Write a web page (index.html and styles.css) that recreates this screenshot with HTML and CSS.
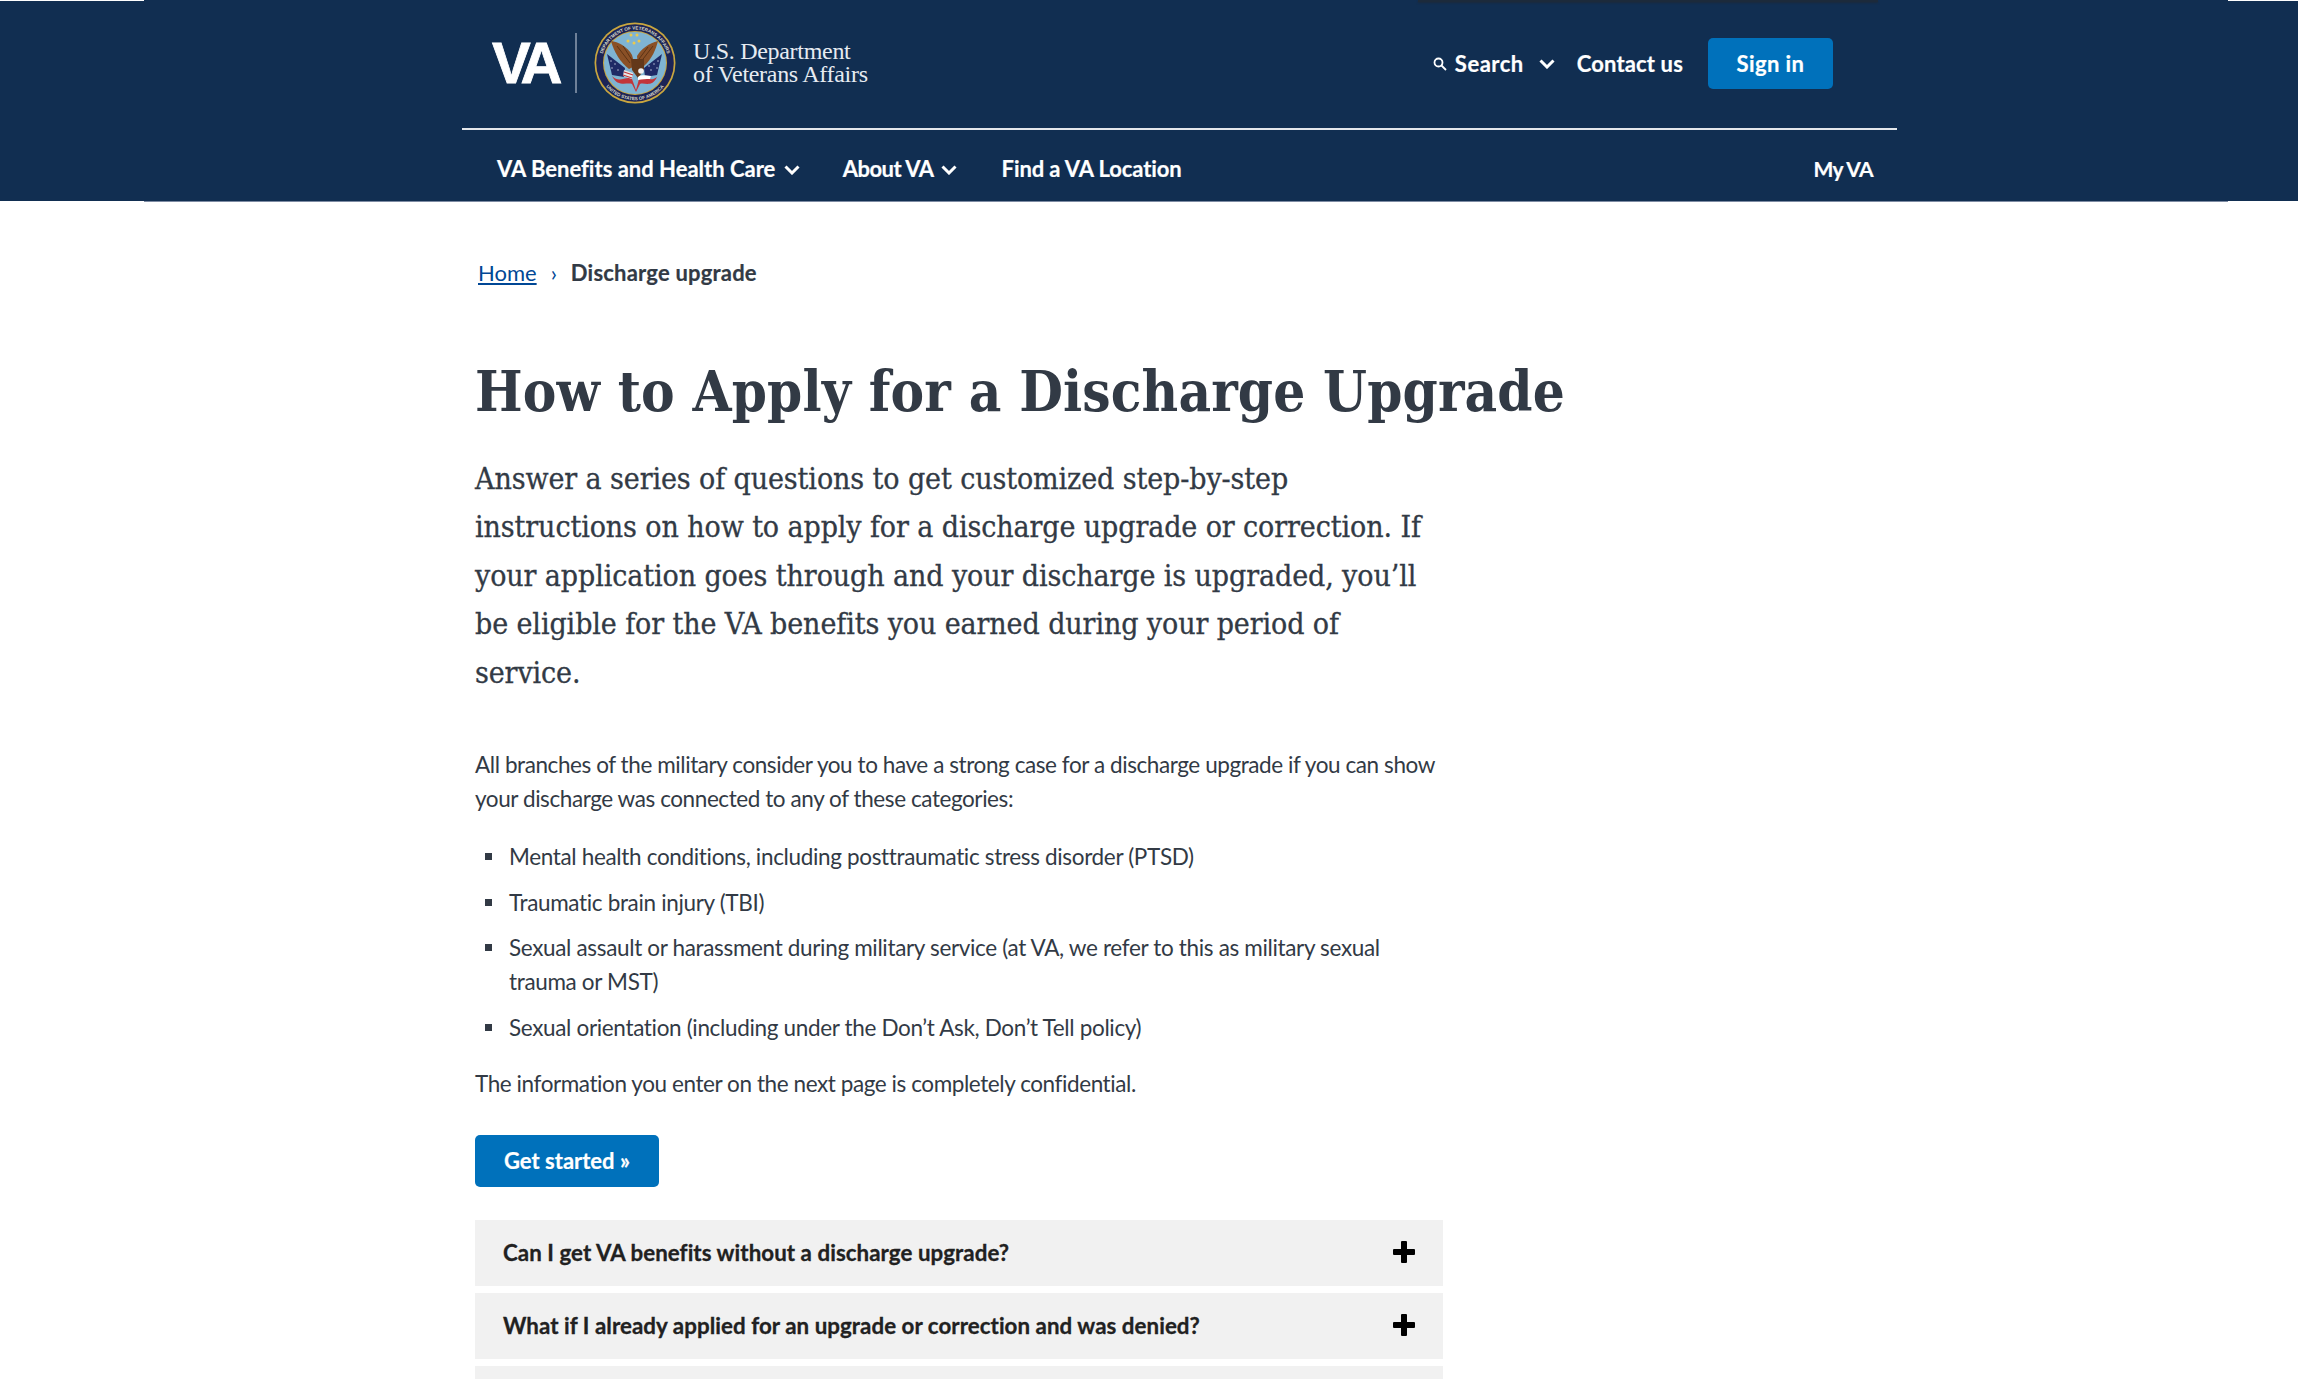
FILE: index.html
```html
<!DOCTYPE html>
<html lang="en">
<head>
  <meta charset="UTF-8">
  <meta name="viewport" content="width=device-width, initial-scale=1.0">
  <title>How to Apply for a Discharge Upgrade</title>
  <link rel="stylesheet" href="styles.css">
</head>
<body>
  <header class="site-header">
    <div class="edge edge-left"></div>
    <div class="edge edge-right"></div>
    <div class="top-shadow"></div>
    <div class="header-inner">
      <div class="header-top">
        <a class="logo" href="#">
          <span class="logo-va">VA</span>
          <span class="logo-divider"></span>
          <svg class="seal" viewBox="0 0 82 82" aria-hidden="true">
            <defs>
              <path id="ring-top" d="M7.500 41a33.500 33.500 0 0 1 67 0"/>
              <path id="ring-bottom" d="M3.800 41a37.200 37.200 0 0 0 74.400 0"/>
            </defs>
            <circle cx="41" cy="41" r="40.500" fill="#c9a63f"/>
            <circle cx="41" cy="41" r="38.800" fill="#1c2456"/>
            <text class="seal-text"><textPath href="#ring-top" startOffset="50%" text-anchor="middle">DEPARTMENT OF VETERANS AFFAIRS</textPath></text>
            <text class="seal-text"><textPath href="#ring-bottom" startOffset="50%" text-anchor="middle">UNITED STATES OF AMERICA</textPath></text>
            <circle cx="41" cy="41" r="32" fill="#c9a63f"/>
            <circle cx="41" cy="41" r="31" fill="#7fb4d3"/>
            <g fill="#ecc94b">
              <circle cx="37" cy="13" r="1.500"/><circle cx="43" cy="13" r="1.500"/>
              <circle cx="34" cy="19" r="1.500"/><circle cx="40" cy="21" r="1.500"/><circle cx="45" cy="19" r="1.500"/>
            </g>
            <path d="M13 32 L31 46 L30 55 L18 53Z" fill="#1f2a66"/>
            <path d="M68 32 L50 46 L51 55 L63 53Z" fill="#1f2a66"/>
            <g fill="#d5dcec">
              <circle cx="17" cy="39" r=".7"/><circle cx="21" cy="42" r=".7"/><circle cx="18" cy="46" r=".7"/><circle cx="24" cy="48" r=".7"/>
              <circle cx="64" cy="39" r=".7"/><circle cx="60" cy="42" r=".7"/><circle cx="63" cy="46" r=".7"/><circle cx="57" cy="48" r=".7"/><circle cx="55" cy="44" r=".7"/>
            </g>
            <path d="M17 19 C24 20 33 24 38 33 L41 44 L35 47 C26 40 20 30 17 19Z" fill="#8a5026"/>
            <path d="M64 19 C62 27 58 37 50 44 L44 44 L43 34 C47 27 55 21 64 19Z" fill="#8a5026"/>
            <path d="M23 24 L36 41 M29 24 L38 38 M59 24 L46 41 M54 25 L45 37" stroke="#5c3315" stroke-width="1" fill="none"/>
            <path d="M37 37 L50 37 L50 48 L44 56 L38 48Z" fill="#63381a"/>
            <circle cx="47" cy="49" r="2.800" fill="#f2f2f2"/>
            <path d="M18 54 C26 62 32 53 38 57 L42 68 L45 57 C50 53 56 61 63 55 C58 66 50 60 46 62 L42 70 L38 62 C33 60 24 66 18 54Z" fill="#c2353a"/>
            <path d="M30 48 L39 51 L38 57 L29 54Z" fill="#e8e8e8"/>
            <path d="M30 50 L39 53 M29 53 L38 56" stroke="#c2353a" stroke-width="1.200"/>
            <path d="M44 55 C48 52 53 54 57 54 L56 57 C52 57 48 57 44 58Z" fill="#fff"/>
          </svg>
          <span class="logo-text">U.S. Department<br>of Veterans Affairs</span>
        </a>
        <div class="utility">
          <a class="utility-search" href="#">
            <svg class="search-icon" viewBox="0 0 14 14" aria-hidden="true"><circle cx="5.500" cy="5.500" r="4" /><path d="M8.500 8.500 13 13"/></svg>
            <span class="search-label">Search</span>
            <svg class="chevron search-chevron" viewBox="0 0 16 10" aria-hidden="true"><path d="M1.500 1.500 8 8l6.500-6.500"/></svg>
          </a>
          <a class="utility-link" href="#">Contact us</a>
          <a class="sign-in" href="#">Sign in</a>
        </div>
      </div>
      <nav class="main-nav">
        <a class="nav-item nav-benefits" href="#">VA Benefits and Health Care
          <svg class="chevron" viewBox="0 0 16 10" aria-hidden="true"><path d="M1.500 1.500 8 8l6.500-6.500"/></svg></a>
        <a class="nav-item nav-about" href="#">About VA
          <svg class="chevron" viewBox="0 0 16 10" aria-hidden="true"><path d="M1.500 1.500 8 8l6.500-6.500"/></svg></a>
        <a class="nav-item nav-find" href="#">Find a VA Location</a>
        <a class="nav-item nav-myva" href="#">My VA</a>
      </nav>
    </div>
  </header>
  <div class="header-rule"></div>

  <main class="content">
    <div class="breadcrumbs">
      <a href="#">Home</a>
      <span class="crumb-sep">›</span>
      <strong>Discharge upgrade</strong>
    </div>

    <h1>How to Apply for a Discharge Upgrade</h1>

    <p class="intro">Answer a series of questions to get customized step-by-step<br>
      instructions on how to apply for a discharge upgrade or correction. If<br>
      your application goes through and your discharge is upgraded, you’ll<br>
      be eligible for the VA benefits you earned during your period of<br>
      service.</p>

    <p class="body-text first">All branches of the military consider you to have a strong case for a discharge upgrade if you can show<br>
      your discharge was connected to any of these categories:</p>

    <ul class="categories">
      <li>Mental health conditions, including posttraumatic stress disorder (PTSD)</li>
      <li>Traumatic brain injury (TBI)</li>
      <li>Sexual assault or harassment during military service (at VA, we refer to this as military sexual<br>trauma or MST)</li>
      <li>Sexual orientation (including under the Don’t Ask, Don’t Tell policy)</li>
    </ul>

    <p class="body-text">The information you enter on the next page is completely confidential.</p>

    <a class="start-btn" href="#">Get started »</a>

    <div class="accordions">
      <div class="accordion"><span>Can I get VA benefits without a discharge upgrade?</span><span class="plus"></span></div>
      <div class="accordion"><span>What if I already applied for an upgrade or correction and was denied?</span><span class="plus"></span></div>
      <div class="accordion"></div>
    </div>
  </main>
</body>
</html>
```

FILE: styles.css
```css
html, body {
  margin: 0;
  padding: 0;
  height: 1379px;
  overflow: hidden;
  background-color: #fff;
}
body {
  font-family: Lato, "Noto Sans", sans-serif;
  font-variant-ligatures: none;
  color: #323a45;
}
a {
  color: inherit;
  text-decoration: none;
}

/* header */
.site-header {
  position: relative;
  background-color: #112e51;
  height: 201px;
}
.edge {
  position: absolute;
  top: 0;
  height: 1px;
  background-color: #fff;
}
.edge-left {
  left: 0;
  width: 144px;
}
.edge-right {
  right: 0;
  width: 70px;
}
.top-shadow {
  position: absolute;
  top: 0;
  left: 1418px;
  width: 460px;
  height: 2px;
  background-color: #1c2a3b;
  box-shadow: 0 1px 2px #1c2a3b;
}
.header-rule {
  height: 1px;
  margin: 0 70px 0 144px;
  background-color: #7d8ba3;
}
.header-inner {
  margin-left: 462px;
  width: 1435px;
  color: #fff;
}
.header-top {
  display: flex;
  justify-content: space-between;
  align-items: center;
  box-sizing: border-box;
  height: 130px;
  padding: 0 64px 2px 30px;
  border-bottom: 2px solid #e4e7eb;
}
.logo {
  display: flex;
  align-items: center;
}
.logo-va {
  font-family: "Liberation Sans", sans-serif;
  font-weight: 700;
  font-size: 58px;
  line-height: 60px;
  letter-spacing: -6px;
  width: 68px;
  -webkit-text-stroke: .8px #fff;
}
.logo-divider {
  width: 2px;
  height: 60px;
  margin: 0 17px 0 15px;
  background-color: #6f8199;
}
.seal {
  width: 82px;
  height: 82px;
}
.seal-text {
  font-family: "Liberation Sans", sans-serif;
  font-size: 4.600px;
  font-weight: 700;
  fill: #d8d8c8;
}
.logo-text {
  margin-left: 17px;
  font-family: "Liberation Serif", serif;
  font-size: 24px;
  line-height: 23px;
  letter-spacing: -.3px;
  color: #e6ebf1;
}
.utility {
  display: flex;
  align-items: center;
  padding-top: 1px;
  font-weight: 700;
  font-size: 22px;
  -webkit-text-stroke: .2px #fff;
}
.utility-search {
  display: flex;
  align-items: center;
}
.search-label {
  letter-spacing: .5px;
}
.search-icon {
  width: 14px;
  height: 14px;
  margin-right: 8px;
  fill: none;
  stroke: #fff;
  stroke-width: 1.800;
}
.chevron {
  width: 16px;
  height: 10px;
  fill: none;
  stroke: #fff;
  stroke-width: 3;
}
.search-chevron {
  margin-left: 15px;
}
.utility-link {
  margin-left: 22px;
  letter-spacing: .15px;
}
.sign-in {
  display: flex;
  align-items: center;
  justify-content: center;
  width: 125px;
  height: 51px;
  margin-left: 25px;
  border-radius: 5px;
  background-color: #0071bb;
  letter-spacing: .4px;
}
.main-nav {
  display: flex;
  align-items: center;
  box-sizing: border-box;
  height: 71px;
  padding: 6px 24px 0 35px;
  font-weight: 700;
  font-size: 22px;
  -webkit-text-stroke: .2px #fff;
}
.nav-benefits {
  margin-right: 43px;
}
.nav-about {
  margin-right: 45px;
  letter-spacing: -.5px;
}
.nav-find {
  letter-spacing: -.1px;
}
.nav-item .chevron {
  margin-left: 3px;
  position: relative;
  top: -2px;
}
.nav-myva {
  margin-left: auto;
  font-size: 21px;
  letter-spacing: -.6px;
}

/* page content */
.content {
  width: 968px;
  padding: 54px 0 0 475px;
}
.breadcrumbs {
  display: flex;
  align-items: center;
  font-size: 22px;
  line-height: 34px;
  padding-left: 3px;
}
.breadcrumbs a {
  color: #004795;
  text-decoration: underline;
}
.crumb-sep {
  margin: 0 14px;
  color: #004795;
}
.breadcrumbs strong {
  font-weight: 700;
  letter-spacing: .2px;
  -webkit-text-stroke: .2px #323a45;
}
h1 {
  margin: 65px 0 0;
  font-family: "DejaVu Serif", serif;
  font-stretch: condensed;
  font-weight: 700;
  font-size: 56px;
  line-height: 72px;
  letter-spacing: .14px;
  white-space: nowrap;
}
.intro {
  margin: 28px 0 0;
  font-family: "DejaVu Serif", serif;
  font-stretch: condensed;
  font-size: 30px;
  line-height: 48.400px;
  letter-spacing: -.1px;
  white-space: nowrap;
  -webkit-text-stroke: .3px #323a45;
}
.body-text {
  margin: 0;
  font-size: 22.500px;
  line-height: 34px;
  letter-spacing: -.42px;
  white-space: nowrap;
}
.body-text.first {
  margin-top: 51px;
}
.categories {
  list-style: none;
  margin: 24px 0 22px;
  padding: 0 0 0 34px;
}
.categories li {
  position: relative;
  margin-bottom: 11.500px;
  font-size: 22.500px;
  line-height: 34px;
  letter-spacing: -.34px;
  white-space: nowrap;
}
.categories li:last-child {
  margin-bottom: 0;
}
.categories li::before {
  content: "";
  position: absolute;
  left: -24px;
  top: 13px;
  width: 7px;
  height: 7px;
  background-color: #323a45;
}
.start-btn {
  display: flex;
  align-items: center;
  justify-content: center;
  width: 184px;
  height: 52px;
  margin-top: 34px;
  border-radius: 5px;
  background-color: #0071bb;
  color: #fff;
  font-weight: 700;
  font-size: 22px;
  -webkit-text-stroke: .2px #fff;
}
.accordions {
  display: flex;
  flex-direction: column;
  gap: 7px;
  margin-top: 33px;
}
.accordion {
  display: flex;
  align-items: center;
  justify-content: space-between;
  box-sizing: border-box;
  height: 66px;
  padding: 0 28px 0 28px;
  background-color: #f1f1f1;
  color: #212121;
  font-weight: 700;
  font-size: 22.300px;
  letter-spacing: .06px;
  -webkit-text-stroke: .3px #212121;
}
.plus {
  position: relative;
  width: 22px;
  height: 22px;
  margin-top: -2px;
}
.plus::before,
.plus::after {
  content: "";
  position: absolute;
  background-color: #000;
  border-radius: 1px;
}
.plus::before {
  left: 8px;
  top: 0;
  width: 6px;
  height: 22px;
}
.plus::after {
  left: 0;
  top: 8px;
  width: 22px;
  height: 6px;
}
```
